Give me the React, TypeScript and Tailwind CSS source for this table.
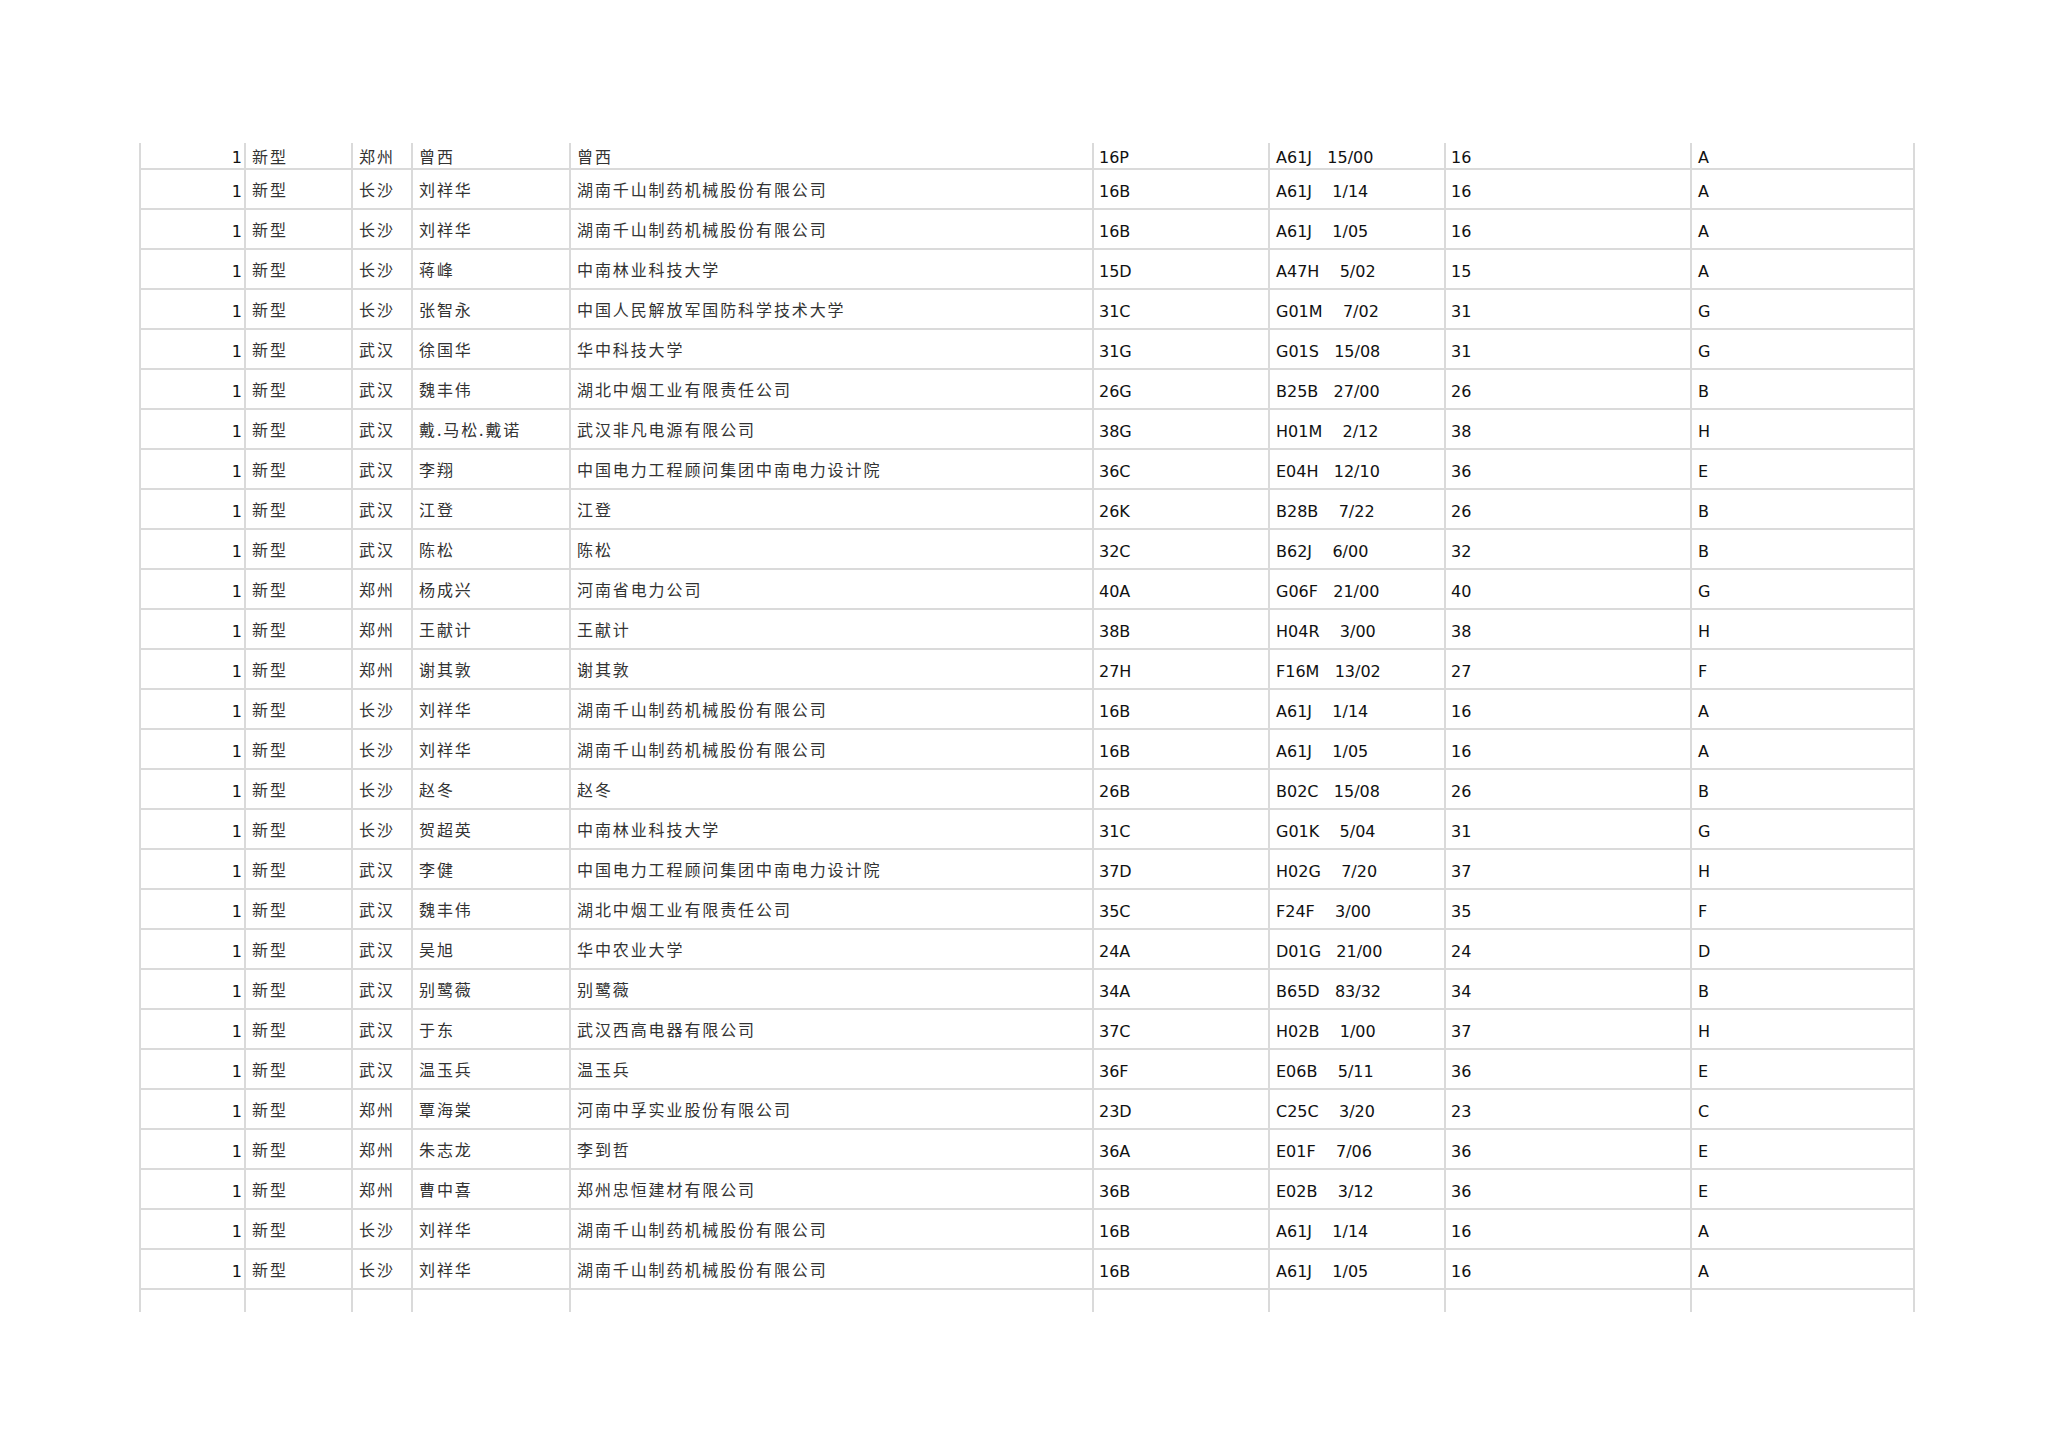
import React from "react";

type R = [string, string, string, string, string, string, string, string, string];

const raw: [string, string, string, string, string, string, string, string][] = [
  ["郑州", "曾西", "曾西", "16P", "A61J", "15/00", "16", "A"],
  ["长沙", "刘祥华", "湖南千山制药机械股份有限公司", "16B", "A61J", "1/14", "16", "A"],
  ["长沙", "刘祥华", "湖南千山制药机械股份有限公司", "16B", "A61J", "1/05", "16", "A"],
  ["长沙", "蒋峰", "中南林业科技大学", "15D", "A47H", "5/02", "15", "A"],
  ["长沙", "张智永", "中国人民解放军国防科学技术大学", "31C", "G01M", "7/02", "31", "G"],
  ["武汉", "徐国华", "华中科技大学", "31G", "G01S", "15/08", "31", "G"],
  ["武汉", "魏丰伟", "湖北中烟工业有限责任公司", "26G", "B25B", "27/00", "26", "B"],
  ["武汉", "戴.马松.戴诺", "武汉非凡电源有限公司", "38G", "H01M", "2/12", "38", "H"],
  ["武汉", "李翔", "中国电力工程顾问集团中南电力设计院", "36C", "E04H", "12/10", "36", "E"],
  ["武汉", "江登", "江登", "26K", "B28B", "7/22", "26", "B"],
  ["武汉", "陈松", "陈松", "32C", "B62J", "6/00", "32", "B"],
  ["郑州", "杨成兴", "河南省电力公司", "40A", "G06F", "21/00", "40", "G"],
  ["郑州", "王献计", "王献计", "38B", "H04R", "3/00", "38", "H"],
  ["郑州", "谢其敦", "谢其敦", "27H", "F16M", "13/02", "27", "F"],
  ["长沙", "刘祥华", "湖南千山制药机械股份有限公司", "16B", "A61J", "1/14", "16", "A"],
  ["长沙", "刘祥华", "湖南千山制药机械股份有限公司", "16B", "A61J", "1/05", "16", "A"],
  ["长沙", "赵冬", "赵冬", "26B", "B02C", "15/08", "26", "B"],
  ["长沙", "贺超英", "中南林业科技大学", "31C", "G01K", "5/04", "31", "G"],
  ["武汉", "李健", "中国电力工程顾问集团中南电力设计院", "37D", "H02G", "7/20", "37", "H"],
  ["武汉", "魏丰伟", "湖北中烟工业有限责任公司", "35C", "F24F", "3/00", "35", "F"],
  ["武汉", "吴旭", "华中农业大学", "24A", "D01G", "21/00", "24", "D"],
  ["武汉", "别鹭薇", "别鹭薇", "34A", "B65D", "83/32", "34", "B"],
  ["武汉", "于东", "武汉西高电器有限公司", "37C", "H02B", "1/00", "37", "H"],
  ["武汉", "温玉兵", "温玉兵", "36F", "E06B", "5/11", "36", "E"],
  ["郑州", "覃海棠", "河南中孚实业股份有限公司", "23D", "C25C", "3/20", "23", "C"],
  ["郑州", "朱志龙", "李到哲", "36A", "E01F", "7/06", "36", "E"],
  ["郑州", "曹中喜", "郑州忠恒建材有限公司", "36B", "E02B", "3/12", "36", "E"],
  ["长沙", "刘祥华", "湖南千山制药机械股份有限公司", "16B", "A61J", "1/14", "16", "A"],
  ["长沙", "刘祥华", "湖南千山制药机械股份有限公司", "16B", "A61J", "1/05", "16", "A"],
];

const rows: R[] = raw.map((r) => [
  "1",
  "新型",
  r[0],
  r[1],
  r[2],
  r[3],
  r[4] + r[5].padStart(8, " "),
  r[6],
  r[7],
]);

const latin = "font-['DejaVu_Sans','Noto_Sans_CJK_SC',sans-serif] text-[16px] text-[#111]";
const cjk = "font-['Noto_Sans_CJK_SC','DejaVu_Sans',sans-serif] text-[16px] tracking-[1.9px] text-[#333]";
const cell = "shrink-0 border-r-2 border-[#dadada] overflow-hidden whitespace-pre leading-[20px]";

function Row({ r, first }: { r: R; first?: boolean }) {
  const pt = first ? "pt-[5px]" : "pt-[12px]";
  const ptc = first ? "pt-[3px]" : "pt-[9px]";
  const h = first ? "h-[27px]" : "h-[40px]";
  return (
    <div className={`flex ${h} border-b-2 border-[#dadada]`}>
      <div className={`${cell} ${latin} ${pt} w-[105px] text-right pr-[2px]`}>{r[0]}</div>
      <div className={`${cell} ${cjk} ${ptc} w-[107px] pl-[6px]`}>{r[1]}</div>
      <div className={`${cell} ${cjk} ${ptc} w-[60px] pl-[6px]`}>{r[2]}</div>
      <div className={`${cell} ${cjk} ${ptc} w-[158px] pl-[6px]`}>{r[3]}</div>
      <div className={`${cell} ${cjk} ${ptc} w-[523px] pl-[6px]`}>{r[4]}</div>
      <div className={`${cell} ${latin} ${pt} w-[176px] pl-[5px]`}>{r[5]}</div>
      <div className={`${cell} ${latin} ${pt} w-[176px] pl-[6px]`}>{r[6]}</div>
      <div className={`${cell} ${latin} ${pt} w-[246px] pl-[5px]`}>{r[7]}</div>
      <div className={`${cell} ${latin} ${pt} w-[223px] pl-[6px]`}>{r[8]}</div>
    </div>
  );
}

function EmptyRow() {
  const widths = ["w-[105px]", "w-[107px]", "w-[60px]", "w-[158px]", "w-[523px]", "w-[176px]", "w-[176px]", "w-[246px]", "w-[223px]"];
  return (
    <div className="flex h-[22px]">
      {widths.map((w, i) => (
        <div key={i} className={`${cell} ${w}`} />
      ))}
    </div>
  );
}

export default function App() {
  return (
    <div className="min-h-[1447px] w-[2048px] bg-white pt-[143px] pl-[139px]">
      <div className="flex w-fit flex-col border-l-2 border-[#dadada]">
        {rows.map((r, i) => (
          <Row key={i} r={r} first={i === 0} />
        ))}
        <EmptyRow />
      </div>
    </div>
  );
}
